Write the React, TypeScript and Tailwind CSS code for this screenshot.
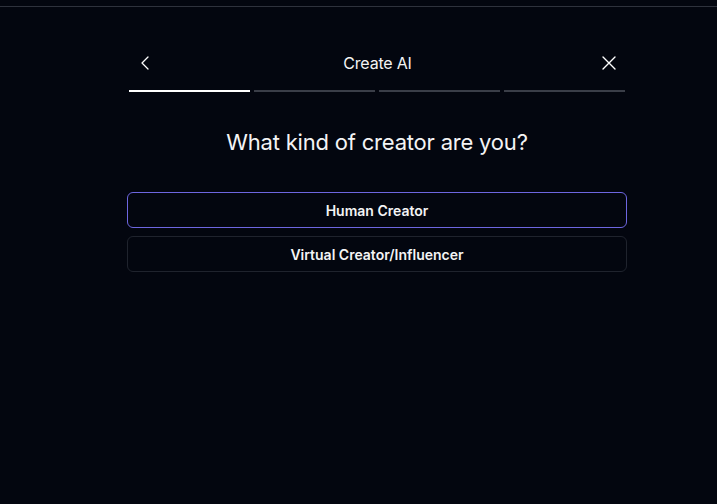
import React, { useState } from 'react';

const options = ['Human Creator', 'Virtual Creator/Influencer'];

const steps = [true, false, false, false];

const App = () => {
  const [selected, setSelected] = useState(0);

  return (
    <div className="min-h-screen w-full bg-[#03060f] text-white" style={{ fontFamily: 'Inter, "Noto Sans", sans-serif' }}>
      {/* top divider */}
      <div className="pt-[6px]">
        <div className="h-px w-full bg-[#2e323c]" />
      </div>

      <div className="ml-[127px] w-[500px] pt-[43px]">
        {/* Header */}
        <div className="px-[2px]">
          <div className="flex h-[26px] items-center justify-between pl-[9px] pr-[8px]">
            <button className="flex h-4 w-4 items-center justify-center text-white">
              <svg width="16" height="16" viewBox="0 0 16 16" fill="none" stroke="currentColor" strokeWidth="1.3" strokeLinecap="round" strokeLinejoin="round">
                <path d="M10 2 4 8l6 6" />
              </svg>
            </button>
            <h1 className="text-[16px] font-normal tracking-[-0.2px] text-[#f4f4f5]">Create AI</h1>
            <button className="flex h-4 w-4 items-center justify-center text-white">
              <svg width="16" height="16" viewBox="0 0 16 16" fill="none" stroke="currentColor" strokeWidth="1.4" strokeLinecap="round">
                <path d="M2 2l12 12M14 2 2 14" />
              </svg>
            </button>
          </div>

          {/* Progress */}
          <div className="mt-[14px] grid grid-cols-4 gap-[4px]">
            {steps.map((done, i) => (
              <div key={i} className={`h-[2px] ${done ? 'bg-white' : 'bg-[#3a3e48]'}`} />
            ))}
          </div>
        </div>

        {/* Question */}
        <h2 className="mt-[36px] text-center text-[22px] font-normal leading-[28px] tracking-[-0.2px] text-[#f4f4f5]">
          What kind of creator are you?
        </h2>

        <div className="mt-[36px] flex flex-col gap-2">
          {options.map((opt, i) => (
            <button
              key={opt}
              onClick={() => setSelected(i)}
              className={`h-9 w-full rounded-md border text-[14px] font-semibold text-[#f4f4f5] ${
                selected === i ? 'border-[#6d66e0]' : 'border-[#1f232d]'
              }`}
            >
              {opt}
            </button>
          ))}
        </div>
      </div>
    </div>
  );
};

export default App;
